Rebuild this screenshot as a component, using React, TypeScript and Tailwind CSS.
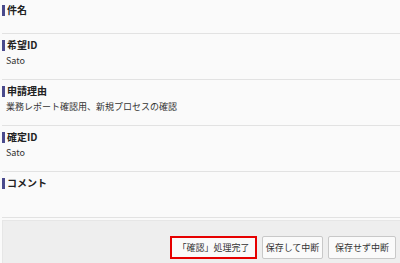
const fields = [
  { label: "件名", value: "", h: "h-[34px]", pt: "pt-[4px]" },
  { label: "希望ID", value: "Sato", h: "h-[46px]", pt: "pt-[5px]" },
  { label: "申請理由", value: "業務レポート確認用、新規プロセスの確認", h: "h-[46px]", pt: "pt-[5px]" },
  { label: "確定ID", value: "Sato", h: "h-[46px]", pt: "pt-[5px]" },
  { label: "コメント", value: "", h: "h-[46px]", pt: "pt-[5px]" },
];

const App = () => {
  return (
    <div
      className="w-[400px] h-[263px] overflow-hidden bg-[#fafafa] text-[#333333]"
      style={{ fontFamily: '"Noto Sans CJK JP", "Noto Sans", sans-serif' }}
    >
      <div className="ml-[2px]">
        {fields.map((f) => (
          <div
            key={f.label}
            className={`${f.h} ${f.pt} border-b border-[#e2e2e2]`}
          >
            <div className="flex items-center h-[12px]">
              <span className="w-[3px] h-[11px] bg-[#4a4a8c] mr-[2px]" />
              <span className="text-[10px] font-bold leading-none text-[#222222]">
                {f.label}
              </span>
            </div>
            {f.value && (
              <div className="mt-[5px] pl-[4px] text-[9px] leading-none">
                {f.value}
              </div>
            )}
          </div>
        ))}
      </div>
      <div className="mt-[2px] ml-[2px] h-[50px] border-t border-l border-[#e6e6e6] bg-[#eeeeee] flex items-start justify-end gap-[5px] pr-[4px] pt-[15px]">
        <button className="w-[87px] h-[23px] border-2 border-[#e60000] bg-[#fafafa] text-[9px] leading-none whitespace-nowrap text-[#333333]">
          「確認」処理完了
        </button>
        <button className="w-[61px] h-[23px] border border-[#c8c8c8] rounded-[2px] bg-[#fafafa] text-[9px] leading-none whitespace-nowrap text-[#333333]">
          保存して中断
        </button>
        <button className="w-[68px] h-[23px] border border-[#c8c8c8] rounded-[2px] bg-[#fafafa] text-[9px] leading-none whitespace-nowrap text-[#333333]">
          保存せず中断
        </button>
      </div>
    </div>
  );
};

export default App;
